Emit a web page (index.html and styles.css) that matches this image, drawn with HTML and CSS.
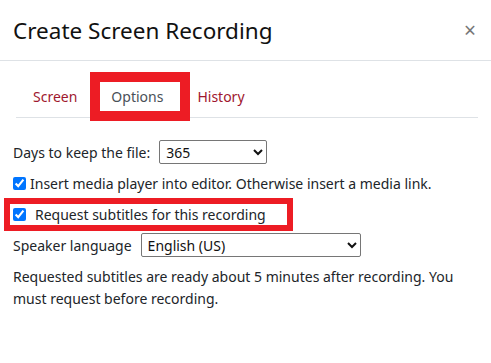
FILE: index.html
```html
<!DOCTYPE html>
<html lang="en">
<head>
    <meta charset="UTF-8">
    <meta name="viewport" content="width=device-width, initial-scale=1.0">
    <title>Create Screen Recording</title>
    <link rel="stylesheet" href="styles.css">
</head>
<body>
    <div class="modal">
        <div class="modal-header">
            <h5 class="modal-title">Create Screen Recording</h5>
            <span class="close">&times;</span>
        </div>

        <div class="modal-body">
            <ul class="tabs">
                <li class="tab">Screen</li>
                <li class="tab active">Options<span class="mark mark-tab"></span></li>
                <li class="tab">History</li>
            </ul>

            <div class="pane">
                <div class="row">
                    <label>Days to keep the file:</label>
                    <select class="select select-days">
                        <option>365</option>
                    </select>
                </div>

                <label class="check check-first">
                    <input type="checkbox" checked>Insert media player into editor. Otherwise insert a media link.
                </label>

                <label class="check check-subs">
                    <input type="checkbox" checked>Request subtitles for this recording
                    <span class="mark mark-subs"></span>
                </label>

                <div class="row row-lang">
                    <label>Speaker language</label>
                    <select class="select select-lang">
                        <option>English (US)</option>
                    </select>
                </div>

                <p class="note">Requested subtitles are ready about 5 minutes after recording. You must request before recording.</p>
            </div>
        </div>
    </div>
</body>
</html>
```

FILE: styles.css
```css
body {
    margin: 0;
    font-family: "Segoe UI", "Noto Sans", sans-serif;
    font-size: 14px;
    color: #212529;
    background: #fff;
}
.modal {
    width: 491px;
}
.modal-header {
    height: 60px;
    border-bottom: 1px solid #dee2e6;
    display: flex;
    align-items: center;
    justify-content: space-between;
    padding: 0 13px;
}
.modal-title {
    margin: 0;
    font-size: 22.5px;
    font-weight: 400;
    color: #111;
}
.close {
    font-size: 21px;
    color: #777;
    line-height: 1;
    margin-right: 2px;
}
.modal-body {
    padding: 16px 13px 0 13px;
}
.tabs {
    list-style: none;
    margin: 0 0 0 3px;
    padding: 0;
    display: flex;
    border-bottom: 1px solid #dee2e6;
    height: 40px;
}
.tab {
    position: relative;
    padding: 0 17px;
    line-height: 40px;
    color: #a0172e;
}
.tab.active {
    color: #495057;
}
.mark {
    position: absolute;
    border: 10px solid #ed1c24;
}
.mark-tab {
    left: -4px;
    top: -5px;
    width: 80px;
    height: 29px;
}
.pane {
    padding-top: 22px;
}
.row {
    display: flex;
    align-items: center;
    height: 24px;
}
.row label {
    margin-right: 9px;
}
.select {
    height: 24px;
    font-family: inherit;
    font-size: 14px;
    color: #111;
    border: 1px solid #767676;
    border-radius: 2px;
    background: #fff;
    padding: 0 2px;
}
.select-days {
    width: 108px;
}
.select-lang {
    width: 220px;
}
.check {
    position: relative;
    display: flex;
    align-items: center;
    height: 22px;
}
.check input {
    width: 13px;
    height: 13px;
    margin: 0 4px 0 0;
}
.check-first {
    margin-top: 8px;
}
.check-subs {
    margin-top: 9px;
}
.check-subs input {
    margin-right: 9px;
}
.mark-subs {
    border-width: 6px;
    left: -9px;
    top: -5px;
    width: 277px;
    height: 21px;
}
.row-lang {
    margin-top: 8px;
}
.note {
    margin: 9px 0 0 0;
    line-height: 22px;
    width: 450px;
}
```
